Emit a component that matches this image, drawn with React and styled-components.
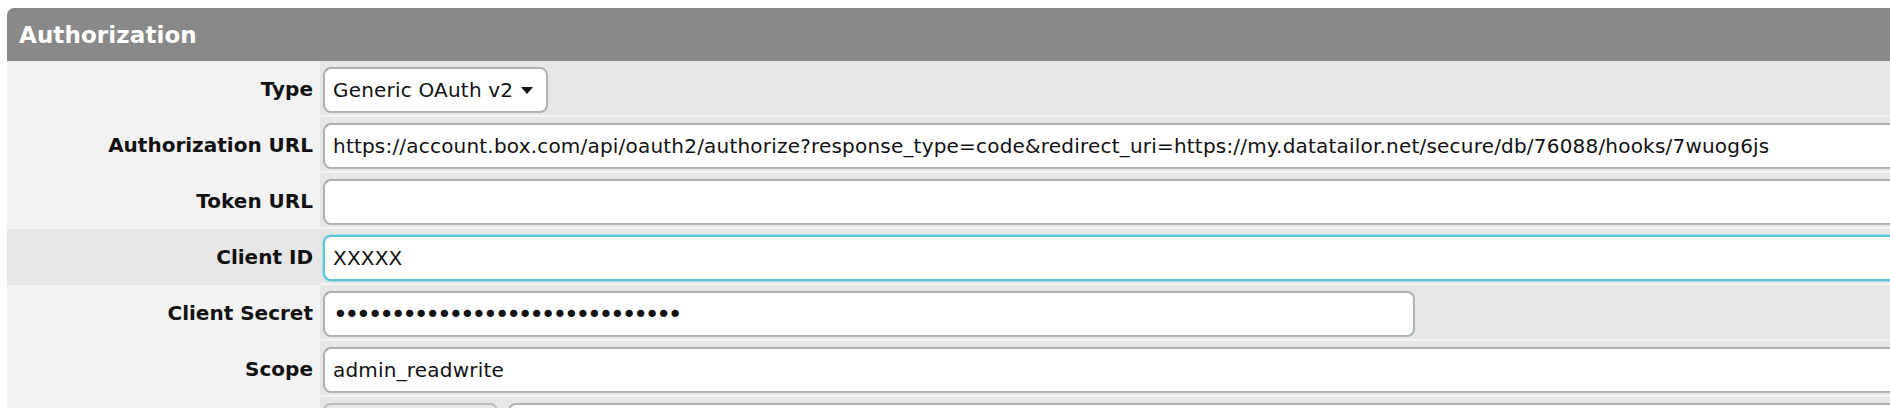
import React from "react";
import styled, { createGlobalStyle } from "styled-components";

const GlobalStyle = createGlobalStyle`
  html, body {
    margin: 0;
    padding: 0;
    background: #ffffff;
    overflow: hidden;
  }
  body {
    font-family: "DejaVu Sans", Verdana, sans-serif;
  }
`;

const fields = [
  { label: "Type", kind: "select", value: "Generic OAuth v2" },
  {
    label: "Authorization URL",
    kind: "text",
    value:
      "https://account.box.com/api/oauth2/authorize?response_type=code&redirect_uri=https://my.datatailor.net/secure/db/76088/hooks/7wuog6js"
  },
  { label: "Token URL", kind: "text", value: "" },
  { label: "Client ID", kind: "text", value: "XXXXX", focused: true },
  {
    label: "Client Secret",
    kind: "password",
    value: "xxxxxxxxxxxxxxxxxxxxxxxxxxxxxx",
    width: "1092px"
  },
  { label: "Scope", kind: "text", value: "admin_readwrite" },
  { label: "", kind: "pair", value: "" }
];

function Field({ field }) {
  if (field.kind === "select") {
    return (
      <SelectWrap>
        <Select defaultValue={field.value}>
          <option>{field.value}</option>
          <option>Generic OAuth v1</option>
        </Select>
        <Caret width="12" height="7" viewBox="0 0 12 7">
          <path d="M0 0 L12 0 L6 7 Z" fill="#111" />
        </Caret>
      </SelectWrap>
    );
  }

  if (field.kind === "pair") {
    return (
      <Pair>
        <GreyBox />
        <Input type="text" defaultValue="" />
      </Pair>
    );
  }

  return (
    <Input
      type={field.kind}
      defaultValue={field.value}
      $focused={field.focused}
      $width={field.width}
      $secret={field.kind === "password"}
      readOnly
    />
  );
}

function App() {
  return (
    <>
      <GlobalStyle />
      <Panel>
        <Header>Authorization</Header>
        {fields.map((field, i) => (
          <Row key={i}>
            <Label $focused={field.focused}>{field.label}</Label>
            <Cell>
              <Field field={field} />
            </Cell>
          </Row>
        ))}
      </Panel>
    </>
  );
}

const Panel = styled.div`
  width: 2100px;
  margin: 8px 0 0 7px;
`;

const Header = styled.div`
  height: 53px;
  display: flex;
  align-items: center;
  padding-left: 12px;
  background: #898989;
  border-radius: 7px 0 0 0;
  color: #ffffff;
  font-family: "DejaVu Sans", Verdana, sans-serif;
  font-weight: bold;
  font-size: 23px;
  letter-spacing: 0.1px;
`;

const Row = styled.div`
  display: grid;
  grid-template-columns: 313px 1fr;
`;

const Label = styled.div`
  display: flex;
  align-items: center;
  justify-content: flex-end;
  padding-right: 7px;
  background: ${p => (p.$focused ? "#e6e6e6" : "#f2f2f2")};
  color: #111111;
  font-weight: bold;
  font-size: 20px;
  white-space: nowrap;
`;

const Cell = styled.div`
  display: flex;
  align-items: center;
  padding: 6px 0 2px 3px;
  background: #e6e6e6;
  border-bottom: 2px solid #f3f3f3;
`;

const Input = styled.input`
  box-sizing: border-box;
  width: ${p => p.$width || "100%"};
  height: 46px;
  padding: 0 8px;
  border: 2px solid ${p => (p.$focused ? "#5ec4d8" : "#abb3b5")};
  border-radius: 8px;
  background: #ffffff;
  color: #111111;
  font-family: "DejaVu Sans", Verdana, sans-serif;
  font-size: ${p => (p.$secret ? "25px" : "20px")};
  letter-spacing: ${p => (p.$secret ? "-3.2px" : "0.2px")};
  outline: none;
  box-shadow: ${p => (p.$focused ? "0 0 0 1px #a6dde8" : "none")};
`;

const SelectWrap = styled.div`
  position: relative;
  width: 225px;
`;

const Select = styled.select`
  box-sizing: border-box;
  width: 100%;
  height: 46px;
  padding: 0 8px;
  appearance: none;
  -webkit-appearance: none;
  border: 2px solid #abb3b5;
  border-radius: 8px;
  background: #ffffff;
  color: #111111;
  font-family: "DejaVu Sans", Verdana, sans-serif;
  font-size: 20px;
  letter-spacing: 0.2px;
  outline: none;
`;

const Caret = styled.svg`
  position: absolute;
  right: 15px;
  top: 20px;
  pointer-events: none;
`;

const Pair = styled.div`
  display: flex;
  gap: 10px;
  width: 100%;
`;

const GreyBox = styled.div`
  flex: 0 0 175px;
  height: 46px;
  box-sizing: border-box;
  border: 2px solid #b9bfc1;
  border-radius: 8px;
  background: #e9e9e9;
`;

export default App;
